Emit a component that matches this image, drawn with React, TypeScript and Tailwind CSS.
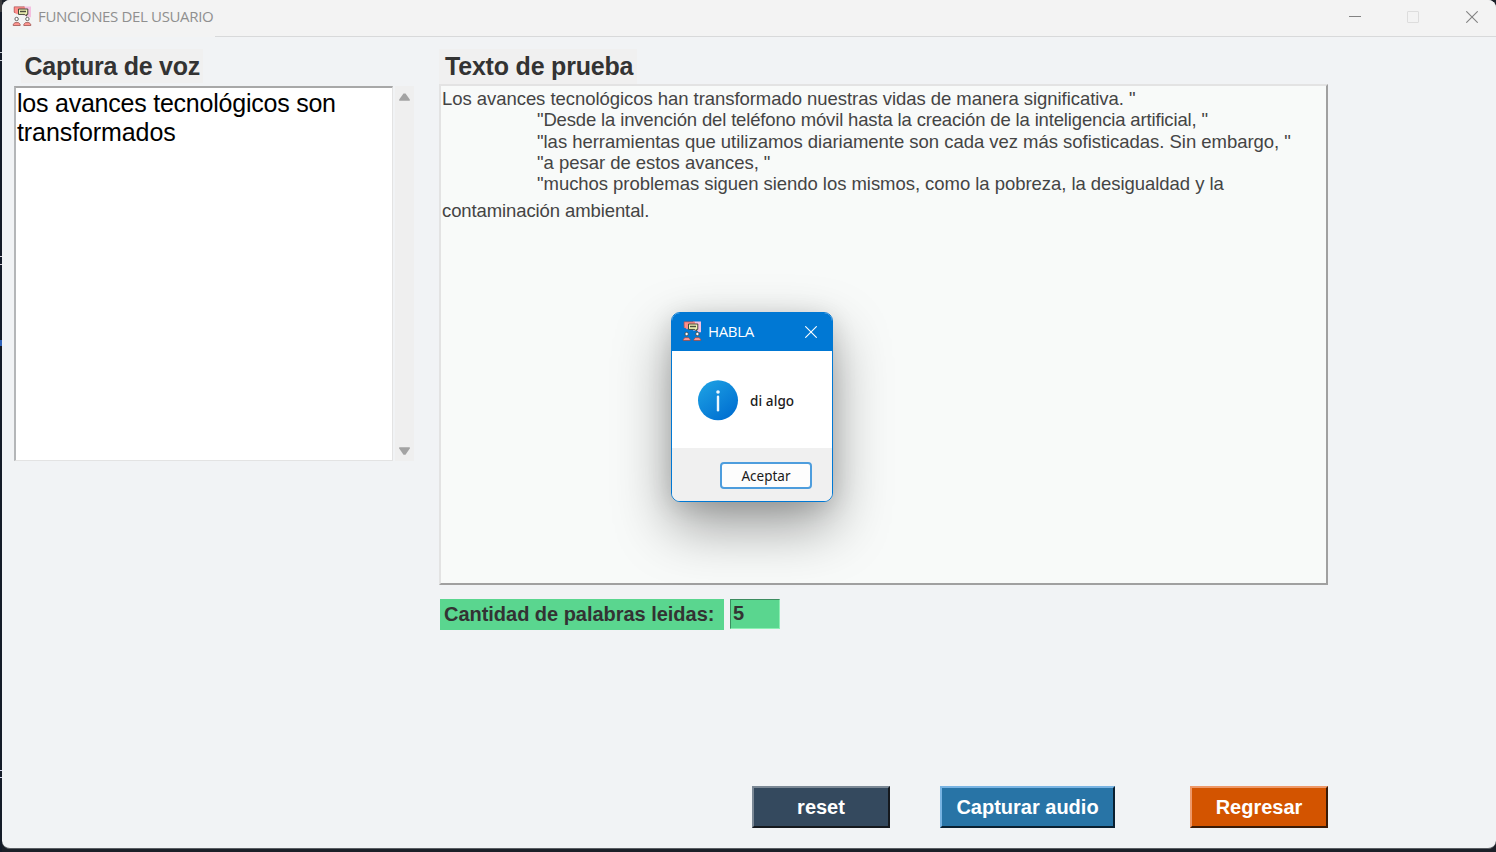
import React from 'react';

function AppIcon() {
  return (
    <svg width="20" height="20" viewBox="0 0 20 20" className="shrink-0">
      <path d="M11 .5h8v10.7h-2.2L15 9.5h-4z" fill="#f4bfe0" />
      <path d="M2 1h11v6H6.5L5 8.5 3.5 7H2z" fill="#ff8f8b" />
      <path d="M12.5.8H2.2v5.4l1.3.8" stroke="#b4595a" strokeWidth=".8" fill="none" />
      <path d="M6.5 3h9.3v5.4h-1.2v1.8L12.8 8.4H6.5z" fill="#f0f3b4" stroke="#45463a" strokeWidth="1" />
      <path d="M8 5.5h6" stroke="#4b4d3d" strokeWidth="1.3" />
      <circle cx="4.6" cy="13" r="1.7" fill="#ffffff" stroke="#45413f" strokeWidth=".8" />
      <circle cx="15.4" cy="13" r="1.7" fill="#ffffff" stroke="#45413f" strokeWidth=".8" />
      <path d="M1.2 19.5v-1.2L3 16.6h3.4l1.8 1.7v1.2zM11.8 19.5v-1.2l1.8-1.7H17l1.8 1.7v1.2z" fill="#ff9690" stroke="#8f4644" strokeWidth=".7" />
    </svg>
  );
}

function CloseGlyph() {
  return (
    <svg width="12" height="12" viewBox="0 0 12 12" fill="none" stroke="currentColor" strokeWidth="1.1">
      <path d="M0.3 0.3 11.7 11.7M11.7 0.3 0.3 11.7" />
    </svg>
  );
}

function TitleBar() {
  return (
    <header className="flex h-[37px] shrink-0 bg-[#f3f3f3]">
      <div className="flex w-[213px] items-start pl-[10px] pt-[6px]">
        <AppIcon />
        <span className="ml-[6px] whitespace-nowrap font-['Open_Sans',sans-serif] text-[15px] leading-[21px] tracking-[-0.35px] text-[#8f8f8f]">
          FUNCIONES DEL USUARIO
        </span>
      </div>
      <div className="flex flex-1 items-start justify-end border-b border-[#d8d9da] pr-[18px] pt-[11px] text-[#828282]">
        <div className="mr-[46px] mt-[5px] h-px w-3 bg-[#828282]" />
        <div className="mr-[47px] h-3 w-3 rounded-[1px] border border-[#dddddd]" />
        <CloseGlyph />
      </div>
    </header>
  );
}

function ScrollBar() {
  return (
    <div className="ml-[2px] flex h-[375px] w-[19px] flex-col items-center justify-between bg-[#efefef] pb-[6px] pt-[7px]">
      <svg width="11" height="8" viewBox="0 0 11 8"><path d="M4.5 0.6h2L10.8 6.6v1.2H.2V6.6z" fill="#a3a3a3" /></svg>
      <svg width="11" height="8" viewBox="0 0 11 8"><path d="M4.5 7.8h2L10.8 1.6V.2H.2v1.4z" fill="#a3a3a3" /></svg>
    </div>
  );
}

function BackdropEdge() {
  return (
    <div className="flex w-[2px] shrink-0 flex-col bg-[#141b28]">
      <div className="h-[12px] bg-[#3a3a3d]" />
      <div className="mt-[40px] h-[9px] border-y border-[#c8ccd4]" />
      <div className="mt-[195px] h-[9px] border-y border-[#d5cfd8]" />
      <div className="mt-[75px] h-[6px] bg-[#2f62b8]" />
      <div className="mt-[424px] h-[8px] border-y border-[#cfd0e6]" />
    </div>
  );
}

function Dialog() {
  return (
    <div className="absolute left-[671px] top-[312px] flex h-[190px] w-[162px] flex-col overflow-hidden rounded-[9px] border border-[#0078d4] bg-white shadow-[0_24px_56px_rgba(0,0,0,0.38),0_4px_24px_rgba(0,0,0,0.12)]">
      <div className="flex h-[38px] shrink-0 items-start bg-[#0078d4] pl-[10px] pt-2 text-white">
        <AppIcon />
        <span className="ml-[6px] font-['Open_Sans',sans-serif] text-[15px] leading-[21px] tracking-[-0.35px]">HABLA</span>
        <div className="ml-auto mr-[15px] mt-[5px]"><CloseGlyph /></div>
      </div>
      <div className="flex h-[97px] shrink-0 items-center bg-white pl-[26px]">
        <svg width="41" height="41" viewBox="0 0 41 41" className="mt-px">
          <defs>
            <linearGradient id="info" x1="0.15" y1="0.1" x2="0.8" y2="0.95">
              <stop offset="0" stopColor="#1b9de2" />
              <stop offset="1" stopColor="#006fd1" />
            </linearGradient>
          </defs>
          <circle cx="20" cy="20.3" r="20" fill="url(#info)" />
          <circle cx="20" cy="12" r="1.8" fill="#eef7fd" />
          <path d="M20 16.8v13.4" stroke="#eef7fd" strokeWidth="2.4" strokeLinecap="round" />
        </svg>
        <span className="ml-[11px] mt-[3px] font-['Noto_Sans',sans-serif] text-[13.5px] font-medium leading-5 tracking-[0.1px] text-[#1a1a1a]">di algo</span>
      </div>
      <div className="flex flex-1 items-start justify-end bg-[#f0f0f0] pr-5 pt-[14px]">
        <button className="h-[27px] w-[92px] rounded-[4px] border-2 border-[#4d9ddd] bg-[#fdfdfd] pt-[3px] font-['Noto_Sans',sans-serif] text-[13.5px] leading-none text-[#1a1a1a]">
          Aceptar
        </button>
      </div>
    </div>
  );
}

export default function App() {
  return (
    <div className="relative flex h-[852px] w-[1496px] overflow-hidden bg-[#1b2028] font-['Liberation_Sans',Arial,sans-serif]">
      <BackdropEdge />
      <div className="flex h-[849px] w-[1494px] shrink-0 flex-col overflow-hidden rounded-[8px] border-b border-[#5b5f64] bg-[#f1f3f5]">
        <TitleBar />
        <main className="flex pl-3 pt-3">
          <section className="w-[425px] shrink-0">
            <h2 className="ml-[7px] h-[34px] w-[182px] whitespace-nowrap bg-[#f0f0f0] pl-[3.5px] text-[25px] font-bold leading-[34px] tracking-[-0.27px] text-[#333333]">
              Captura de voz
            </h2>
            <div className="mt-[3px] flex">
              <div className="h-[375px] w-[379px] whitespace-nowrap border-b border-l-2 border-r border-t-2 border-b-[#e3e3e3] border-l-[#b4b6b8] border-r-[#e3e3e3] border-t-[#a8a8a8] bg-white pl-px pt-px text-[25px] leading-[29px] text-black">
                <div className="tracking-[-0.23px]">los avances tecnológicos son</div>
                <div className="tracking-[-0.09px]">transformados</div>
              </div>
              <ScrollBar />
            </div>
          </section>
          <section className="w-[889px] shrink-0">
            <h2 className="h-[35px] w-[198px] whitespace-nowrap bg-[#f0f0f0] pl-[6px] text-[25px] font-bold leading-[34px] tracking-[-0.2px] text-[#333333]">
              Texto de prueba
            </h2>
            <div className="h-[501px] whitespace-nowrap border-b-2 border-l-2 border-r-2 border-t-2 border-b-[#a0a0a0] border-l-[#e3e3e3] border-r-[#a0a0a0] border-t-[#e3e3e3] bg-[#f8faf9] pl-px pt-[2px] text-[18.5px] leading-[21.25px] text-[#444444]">
              <div className="tracking-[-0.05px]">Los avances tecnológicos han transformado nuestras vidas de manera significativa. "</div>
              <div className="pl-[95px] tracking-[-0.155px]">"Desde la invención del teléfono móvil hasta la creación de la inteligencia artificial, "</div>
              <div className="pl-[95px] tracking-[-0.03px]">"las herramientas que utilizamos diariamente son cada vez más sofisticadas. Sin embargo, "</div>
              <div className="pl-[95px] tracking-[-0.03px]">"a pesar de estos avances, "</div>
              <div className="pl-[95px] tracking-[-0.045px]">"muchos problemas siguen siendo los mismos, como la pobreza, la desigualdad y la</div>
              <div className="pt-[6px] tracking-[-0.1px]">contaminación ambiental.</div>
            </div>
            <div className="ml-px mt-[14px] flex gap-[6px] text-[20px] font-bold text-[#333333]">
              <div className="h-[31px] w-[284px] whitespace-nowrap bg-[#5ad68f] pl-[4px] leading-[31px] tracking-[-0.03px]">Cantidad de palabras leidas:</div>
              <div className="h-[30px] w-[50px] border border-b-[#8df0b4] border-l-[#3d8c60] border-r-[#8df0b4] border-t-[#3d8c60] bg-[#5ad68f] pl-[2px] leading-[27px]">5</div>
            </div>
            <div className="mt-[156px] flex pl-[313px] text-[20px] font-bold text-white">
              <button className="h-[42px] w-[138px] border-2 border-b-[#15191e] border-l-[#7b8895] border-r-[#15191e] border-t-[#7b8895] bg-[#34495e]">reset</button>
              <button className="ml-[50px] h-[42px] w-[175px] border-2 border-b-[#0a2031] border-l-[#78b3e2] border-r-[#0a2031] border-t-[#78b3e2] bg-[#2874a6]">Capturar audio</button>
              <button className="ml-[75px] h-[42px] w-[138px] border-2 border-b-[#3a1a06] border-l-[#ee9868] border-r-[#3a1a06] border-t-[#ee9868] bg-[#d35400]">Regresar</button>
            </div>
          </section>
        </main>
      </div>
      <Dialog />
    </div>
  );
}
